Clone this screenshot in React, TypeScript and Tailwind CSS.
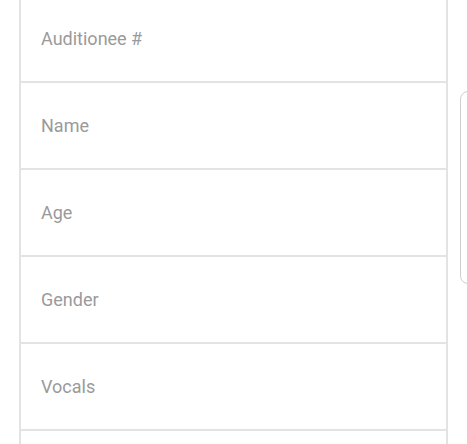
import React from "react";

const fields = ["Auditionee #", "Name", "Age", "Gender", "Vocals", ""];

export default function App() {
  return (
    <div className="relative w-[467px] h-[444px] overflow-hidden bg-white" style={{ fontFamily: "Roboto, 'Noto Sans', sans-serif" }}>
      <div className="-mt-[4px] ml-[19px] w-[429px] border-x-2 border-[#e3e3e3]">
        {fields.map((f, i) => (
          <div key={i} className="h-[87px] border-b-2 border-[#e3e3e3] flex items-center pl-[20px]">
            <span className="text-[18px] text-[#9a9a9a]">{f}</span>
          </div>
        ))}
      </div>
      <div className="absolute left-[460px] top-[91px] w-[40px] h-[193px] rounded-[8px] border border-[#cfcfcf] bg-white" />
    </div>
  );
}
